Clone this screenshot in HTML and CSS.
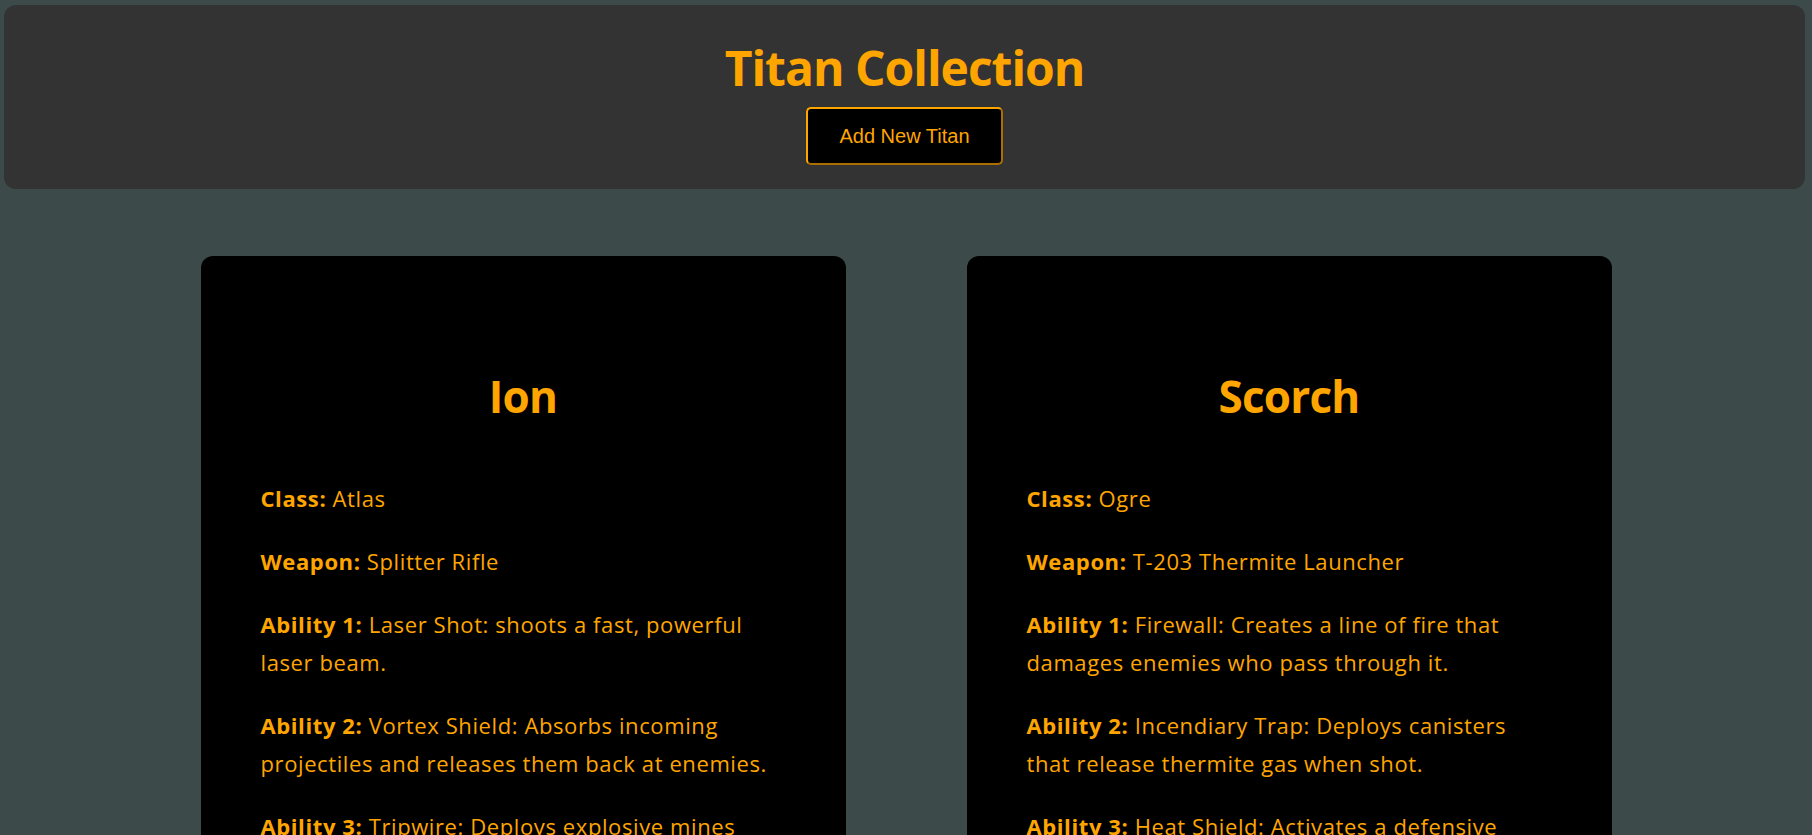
FILE: index.html
```html
<!DOCTYPE html>
<html lang="en">
<head>
<meta charset="utf-8">
<title>Titan Collection</title>
<link rel="stylesheet" href="styles.css">
</head>
<body>
<header class="site-header">
  <h1 class="site-title">Titan Collection</h1>
  <button class="add-btn" type="button">Add New Titan</button>
</header>
<main class="titan-list">
  <article class="titan-card">
    <h2 class="titan-name">Ion</h2>
    <p class="titan-row"><strong>Class:</strong> Atlas</p>
    <p class="titan-row"><strong>Weapon:</strong> Splitter Rifle</p>
    <p class="titan-row"><strong>Ability 1:</strong> Laser Shot: shoots a fast, powerful laser beam.</p>
    <p class="titan-row"><strong>Ability 2:</strong> Vortex Shield: Absorbs incoming projectiles and releases them back at enemies.</p>
    <p class="titan-row"><strong>Ability 3:</strong> Tripwire: Deploys explosive mines around an area to damage enemies.</p>
  </article>
  <article class="titan-card">
    <h2 class="titan-name">Scorch</h2>
    <p class="titan-row"><strong>Class:</strong> Ogre</p>
    <p class="titan-row"><strong>Weapon:</strong> T-203 Thermite Launcher</p>
    <p class="titan-row"><strong>Ability 1:</strong> Firewall: Creates a line of fire that damages enemies who pass through it.</p>
    <p class="titan-row"><strong>Ability 2:</strong> Incendiary Trap: Deploys canisters that release thermite gas when shot.</p>
    <p class="titan-row"><strong>Ability 3:</strong> Heat Shield: Activates a defensive barrier that blocks incoming damage.</p>
  </article>
</main>
</body>
</html>
```
FILE: styles.css
```css
html, body {
  margin: 0;
  padding: 0;
}
body {
  background: #3c4a4a;
  color: #ffa500;
  font-family: "Trebuchet MS", "Open Sans", Lato, sans-serif;
  padding: 5px 7px 0 4px;
}
.site-header {
  background: #333333;
  border-radius: 12px;
  padding: 34px 20px 24px;
  display: flex;
  flex-direction: column;
  align-items: center;
}
.site-title {
  margin: 0;
  font-size: 48px;
  line-height: 58px;
  font-weight: 700;
  letter-spacing: -1px;
  color: #ffa500;
}
.add-btn {
  margin-top: 10px;
  background: #000;
  color: #ffa500;
  border: 2px outset #ffa500;
  border-radius: 5px;
  padding: 15px 31px;
  font-family: "Liberation Sans", Arial, sans-serif;
  font-size: 20px;
  line-height: 24px;
  cursor: pointer;
}
.titan-list {
  display: flex;
  justify-content: center;
  gap: 121px;
  padding-top: 67px;
  margin-left: -4px;
  margin-right: -7px;
}
.titan-card {
  flex: 0 0 645px;
  box-sizing: border-box;
  background: #000;
  border-radius: 12px;
  padding: 60px;
}
.titan-name {
  margin: 54px 0 56px;
  text-align: center;
  font-size: 44px;
  line-height: 53px;
  font-weight: 700;
  letter-spacing: -0.8px;
}
.titan-row {
  margin: 0 0 25px;
  font-size: 22px;
  line-height: 38px;
  letter-spacing: 0.6px;
}
.titan-row strong {
  font-weight: 700;
}
```
